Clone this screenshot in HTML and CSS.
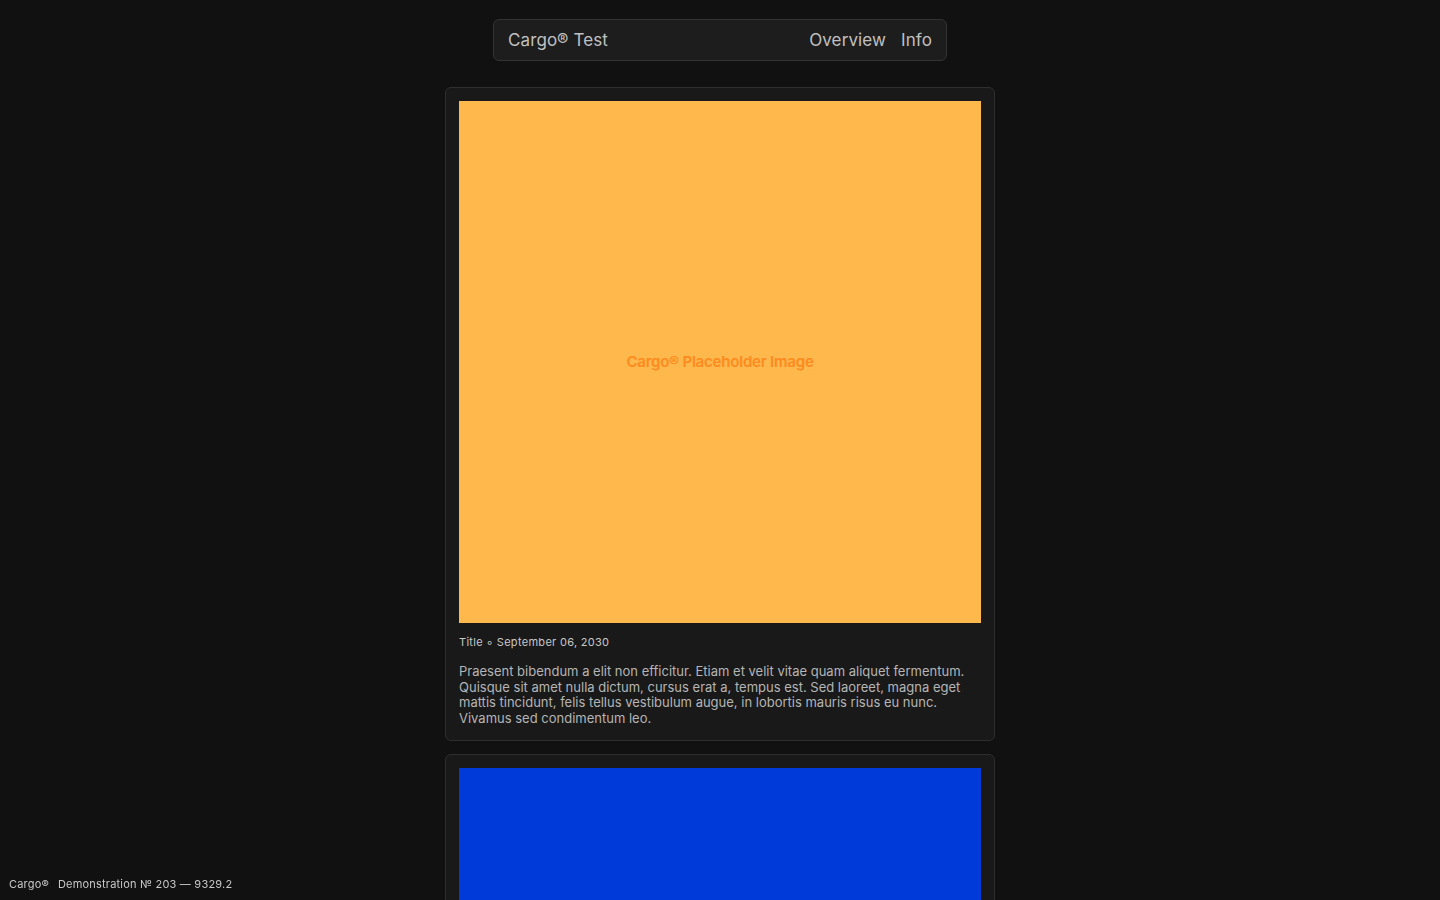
FILE: index.html
```html
<!DOCTYPE html>
<html lang="en">
<head>
<meta charset="utf-8">
<title>Cargo® Test</title>
<link rel="stylesheet" href="styles.css">
</head>
<body>
<header class="topbar">
  <div class="brand">Cargo® Test</div>
  <nav class="nav">
    <a href="#">Overview</a>
    <a href="#">Info</a>
  </nav>
</header>
<main class="feed">
  <article class="card">
    <div class="media media-orange"><span class="media-label">Cargo® Placeholder Image</span></div>
    <div class="meta">Title <span class="dot">◦</span> September 06, 2030</div>
    <p class="body">Praesent bibendum a elit non efficitur. Etiam et velit vitae quam aliquet fermentum. Quisque sit amet nulla dictum, cursus erat a, tempus est. Sed laoreet, magna eget mattis tincidunt, felis tellus vestibulum augue, in lobortis mauris risus eu nunc. Vivamus sed condimentum leo.</p>
  </article>
  <article class="card">
    <div class="media media-blue"></div>
  </article>
</main>
<footer class="sitefoot"><span class="foot-brand">Cargo®</span><span>Demonstration № 203 — 9329.2</span></footer>
</body>
</html>
```

FILE: styles.css
```css
html, body {
  margin: 0;
  padding: 0;
  background: #111111;
  height: 100%;
  overflow: hidden;
}
body {
  font-family: Inter, "Liberation Sans", sans-serif;
  color: #bdbdbd;
}
.topbar {
  width: 454px;
  height: 42px;
  box-sizing: border-box;
  margin: 19px auto 0;
  background: #1d1d1d;
  border: 1px solid #333333;
  border-radius: 6px;
  display: flex;
  align-items: center;
  justify-content: space-between;
  padding: 0 14px 0 14px;
  font-size: 17px;
  letter-spacing: 0.1px;
}
.brand { color: #c0c0c0; }
.nav { display: flex; gap: 15px; }
.nav a { color: #c0c0c0; text-decoration: none; }
.feed {
  width: 550px;
  margin: 26px auto 0;
  display: flex;
  flex-direction: column;
  gap: 13px;
}
.card {
  box-sizing: border-box;
  background: #191919;
  border: 1px solid #2e2e2e;
  border-radius: 6px;
  padding: 13px 13px 13px;
}
.media {
  width: 522px;
  height: 522px;
  display: flex;
  align-items: center;
  justify-content: center;
}
.media-orange { background: #feb84b; }
.media-blue { background: #003bd9; }
.media-label {
  color: #ff8a1f;
  font-size: 15px;
  font-weight: 600;
  letter-spacing: -0.2px;
  margin-top: -2px;
}
.meta {
  margin-top: 12px;
  font-size: 11px;
  line-height: 14px;
  height: 14px;
  color: #c8c8c8;
  letter-spacing: 0.3px;
}
.dot { font-size: 12px; line-height: 1; }
.body {
  margin: 15px 0 0;
  font-size: 13px;
  line-height: 15.7px;
  color: #b5b5b5;
}
.sitefoot {
  position: fixed;
  left: 9px;
  bottom: 9px;
  font-size: 11px;
  color: #c8c8c8;
  display: flex;
  gap: 9px;
  letter-spacing: 0.2px;
}
```
